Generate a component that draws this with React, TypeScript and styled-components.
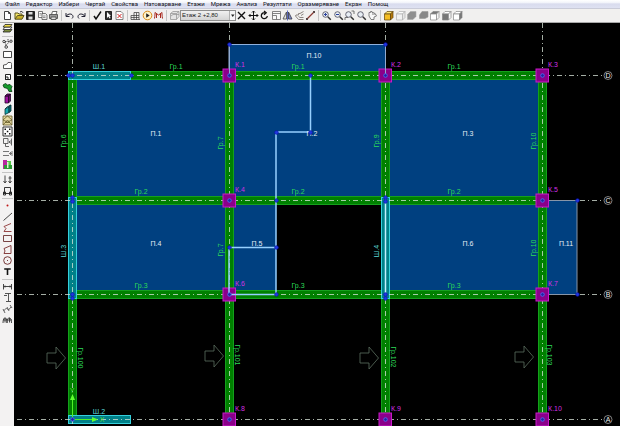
import React from "react";
import styled, { createGlobalStyle } from "styled-components";

const GlobalStyle = createGlobalStyle`
  * { box-sizing: border-box; }
  html, body { margin: 0; background: #000; }
  body { font-family: "Liberation Sans", Arial, sans-serif; }
`;

const Window = styled.div`
  display: flex;
  flex-direction: column;
  height: 100vh;
  overflow: hidden;
`;

const MenuBar = styled.nav`
  display: flex;
  flex: none;
  gap: 6px;
  height: 9px;
  padding: 0 5px;
  background: linear-gradient(#ffffff 0%, #f4f6fb 30%, #d9dcee 50%, #dfe2f2 100%);
  border-bottom: 1px solid #c9cbd8;
`;

const MenuItem = styled.button`
  flex: none;
  padding: 0;
  border: 0;
  background: none;
  color: #101018;
  font: 6px/8px Roboto, "Liberation Sans", sans-serif;
  white-space: nowrap;
`;

const ToolBar = styled.div`
  display: flex;
  flex: none;
  align-items: center;
  height: 14px;
  padding-left: 2px;
  background: #f1f0ef;
  border-bottom: 1px solid #a8a8a8;
`;

const ToolGroup = styled.div<{ $width?: number }>`
  display: flex;
  flex: none;
  justify-content: space-between;
  width: ${(p) => (p.$width ? `${p.$width}px` : "auto")};
`;

const Divider = styled.span`
  flex: none;
  width: 1px;
  height: 11px;
  margin: 0 2px;
  background: #c4c4c4;
`;

const ToolButton = styled.button`
  display: block;
  flex: none;
  width: 11px;
  height: 11px;
  padding: 0;
  border: 0;
  background: none;
  color: #222;

  svg {
    display: block;
    width: 11px;
    height: 11px;
    fill: none;
    stroke: currentColor;
    stroke-width: 1;
  }
`;

const StoreySelect = styled.span`
  display: flex;
  flex: none;
  width: 56px;
  height: 11px;
  border: 1px solid #8e8e8e;
  background: linear-gradient(#f0f0f0, #d4d4d4);

  select {
    flex: 1;
    min-width: 0;
    padding: 0 0 0 1px;
    border: 0;
    appearance: none;
    background: none;
    color: #222;
    font: 6px/9px "Liberation Sans", Arial, sans-serif;
  }
  svg {
    flex: none;
    width: 6px;
    height: 9px;
    background: #f6f6f6;
    border-left: 1px solid #b0b0b0;
    pointer-events: none;
  }
`;

const Workspace = styled.div`
  display: flex;
  flex: 1;
  min-height: 0;
`;

const SideBar = styled.div`
  display: flex;
  flex: none;
  flex-direction: column;
  width: 14px;
  padding-left: 2px;
  background: #f3f2f2;
`;

const SideDivider = styled.span`
  flex: none;
  width: 11px;
  height: 1px;
  margin: 2px 0 1px;
  background: #c4c4c4;
`;

const Canvas = styled.main`
  flex: 1;
  min-width: 0;
  background: #000;

  svg {
    display: block;
    width: 100%;
    height: 100%;
  }
  text {
    font: 7px "Liberation Sans", Arial, sans-serif;
    text-anchor: middle;
  }
`;

const cube = (top: string, front: string, side: string, line: string) => (
  <g stroke={line} strokeWidth=".7">
    <path d="M1.5 4 4 1.5h6L7.5 4z" fill={top} />
    <path d="M1.5 4h6v6h-6z" fill={front} />
    <path d="M7.5 4 10 1.5v6L7.5 10z" fill={side} />
  </g>
);

const lens = (extra: React.ReactNode) => (
  <g>
    <circle cx="4.5" cy="4.5" r="2.8" fill="#e8eef4" stroke="#445" strokeWidth=".8" />
    <path d="m6.8 6.8 3 3" stroke="#333" strokeWidth="1.5" />
    {extra}
  </g>
);

const icons: Record<string, React.ReactNode> = {
  new: <path d="M2.5 1.5h4l2 2v6h-6zM6.5 1.5v2h2" fill="#fff" stroke="#444" />,
  open: (
    <g stroke="#5d5520">
      <path d="M1 9V3h3l1 1h3v1.5" fill="#f4e66a" />
      <path d="M1 9.2 3.5 5.5H10L8 9.2z" fill="#c8b028" />
      <path d="M6 2c1.5-1 2.5-.5 3 .8" stroke="#333" />
    </g>
  ),
  save: (
    <g>
      <path d="M1.5 1.5h8v8h-8z" fill="#222" />
      <path d="M3.5 2h4v2.5h-4zM3.5 6.5h4v3h-4z" fill="#ddd" stroke="none" />
    </g>
  ),
  copy: (
    <g stroke="#555" strokeWidth=".8">
      <path d="M1.5 1.5h4v6h-4z" fill="#fff" />
      <path d="M5 3.5h3.5L10 5v4.5H5z" fill="#eee" />
      <path d="M6 6h2.5M6 7.5h2.5M2.5 3.5h2M2.5 5h2" strokeWidth=".6" />
    </g>
  ),
  print: (
    <g stroke="#444" strokeWidth=".8">
      <path d="M3.5 4.5 4.5 1.5H9l-1 3" fill="#fff" />
      <path d="M1.5 4.5h8v4h-8z" fill="#999" />
      <path d="M3 7h5v2.5H3z" fill="#ddd" />
    </g>
  ),
  undo: <path d="M2 3v3.5h3.5M2.3 6C4 3.5 8.5 3 9 6.5c0 1-.5 1.500-1 2" stroke="#223" />,
  redo: <path d="M9 3v3.5H5.5M8.7 6C7 3.5 2.5 3 2 6.5c0 1 .5 1.500 1 2" stroke="#223" />,
  check: <path d="m2 6 2 3 5-7.5" stroke="#111" strokeWidth="1.5" />,
  pick: (
    <g>
      <path d="M2.5 1.5h6v8h-6z" fill="#333" stroke="#222" />
      <path d="M4 2v6l1.5-1.5 1 2 1-.5-1-2H8z" fill="#fff" stroke="none" />
    </g>
  ),
  discard: (
    <g>
      <path d="M2 1.5h5l2 2v6H2z" fill="#fff" stroke="#666" strokeWidth=".8" />
      <path d="m3.5 4 4 4m0-4-4 4" stroke="#d02020" />
    </g>
  ),
  frame: <path d="M4 9.5v-7h2.5v7M6.5 2.5H9v7M1 9.5v-4h8M1 9.5h9M1 7.5h8" stroke="#333" strokeWidth=".7" />,
  run: (
    <g>
      <circle cx="5.5" cy="5.5" r="4.3" fill="#fff3c8" stroke="#d88a18" />
      <path d="m4.2 3.2 3.5 2.3-3.5 2.3z" fill="#222" stroke="none" />
    </g>
  ),
  moment: <path d="M1.5 8.5c.5-3 .5-4 .5-6L5.5 5 9 2.5c0 2 0 3 .5 6M3.5 8V4M7.5 8V4" stroke="#a82820" />,
  storey: <path d="M1.5 3.5 4 1.5h6v5L7.5 9.5h-6zM1.5 3.5h6v6M7.5 3.5l2.5-2M2 6l2-1.5h6" stroke="#999" strokeWidth=".8" fill="#e4e4e4" />,
  erase: <path d="m2 2 7 7m0-7-7 7" stroke="#111" strokeWidth="1.4" />,
  move: <path d="M5.5 1v9M1 5.5h9M4 2.5 5.5 1 7 2.5M4 8.5 5.5 10 7 8.5M2.5 4 1 5.5 2.5 7M8.5 4 10 5.5 8.5 7" stroke="#111" />,
  rotate: <path d="M8.3 6A3 3 0 1 1 6 2.7M5 .9l2.2 1.9L5 4.7" stroke="#111" strokeWidth="1.3" />,
  scale: <path d="M1.5 1.5h8v8h-8zM1.5 5.5h4v4M1.5 3.5h8" stroke="#666" fill="#f8f8f8" strokeWidth=".8" />,
  mirror: (
    <g strokeWidth=".8">
      <path d="M4.5 2v7H1z" fill="#e2e2e2" stroke="#444" />
      <path d="M6.5 2v7H10z" fill="#7d8cc8" stroke="#334" />
      <path d="M5.5.5v10" stroke="#3344a8" />
    </g>
  ),
  offset: <path d="M9.5 1.5 6 3.5H4.5V5H2L1.5 6l3 3.5h5M9.5 4 7 5.5M4.5 6.5 6 7.5h3.5" stroke="#8c8580" />,
  measure: (
    <g>
      <path d="m2 9 7-7" stroke="#8c3c34" strokeWidth="1.3" />
      <path d="M1 8h2v2H1zM8 1h2v2H8z" fill="#544" stroke="none" />
    </g>
  ),
  zoomin: lens(<path d="M3 4.5h3M4.5 3v3" stroke="#2a3f9c" />),
  zoomout: lens(<path d="M3 4.5h3" stroke="#2a3f9c" />),
  zoomwin: lens(<path d="M1 10V7.5h3M7.5 1H10v3" stroke="#555" strokeWidth=".8" />),
  zoomall: lens(null),
  pan: <path d="M2 6V2.5h1.5v-1H5v1h1.500l2 1.500M2 6l2 3.500h3V7l2.500-1-1-2H5" stroke="#666" fill="#f8f8f8" strokeWidth=".8" />,
  cubeY: cube("#ffe878", "#f4bd22", "#b77a0c", "#60440a"),
  cubeW: cube("#fafafa", "#f2f2f2", "#e6e6e6", "#b0b0b0"),
  cubeG: <path d="M1.5 4.5 4.5 1.5H10v5L7 9.5H1.5z" fill="#8f8f8f" stroke="#a8a8a8" strokeWidth=".6" />,
  cubeH: <path d="M1.5 5 4 1.5h6V7L7 8.5H1.5z" fill="#888" stroke="#999" strokeWidth=".6" />,
  cubeT: cube("#777", "#fff", "#f5f5f5", "#888"),
  cubeF: cube("#fff", "#777", "#f5f5f5", "#888"),
  cubeS: cube("#fff", "#fff", "#777", "#888"),
  layers: (
    <g stroke="#222" strokeWidth=".8">
      <path d="m1 9 2-2.5h7L8 9z" fill="#7b8b3a" />
      <path d="m1 6.5 2-2.5h7L8 6.5z" fill="#fff" />
      <path d="m1 4 2-2.5h7L8 4z" fill="#f0dc48" />
    </g>
  ),
  nodes: (
    <g stroke="#333" strokeWidth=".9">
      <path d="M3 3.5h5M3 4l1 4M4.5 6.5l3.5-3M6 1v2" strokeDasharray="1.5 1" />
      <circle cx="2" cy="3.5" r="1.2" />
      <circle cx="9" cy="3.2" r="1.2" />
      <circle cx="4.2" cy="9" r="1.3" />
    </g>
  ),
  rect: <path d="M1.5 2.5h8v6h-8z" stroke="#333" fill="#fff" strokeWidth=".9" />,
  poly: <path d="M1.5 8.5V5l3-.5L6 2.5h2.5c1 0 1 1 1 2v4z" stroke="#444" fill="#fff" strokeWidth=".9" />,
  opening: <path d="M3.5 3.5h5v5h-5zM3.5 8.5H6V6H3.5z" stroke="#222" fill="#fff" />,
  beam: <path d="m1 3 2.500-1.500L5.500 3 8 2.500 10 4.500 9 7l1 2.500L7 9.500 5.500 6.500 2 5.500z" fill="#159a2c" stroke="#063c10" strokeWidth=".8" />,
  column: (
    <g stroke="#24062a" strokeWidth=".8">
      <path d="M3 3v7h3.5V3z" fill="#a012a0" />
      <path d="M6.5 3v7l2-2V1zM3 3l2-2h3.5l-2 2z" fill="#6c086c" />
    </g>
  ),
  wall: (
    <g stroke="#043034" strokeWidth=".8">
      <path d="M3 5v5.5l4-2V3z" fill="#18a8b0" />
      <path d="M7 3v5.5L9 7V1L7 2zM3 5l2-2 4-2" fill="#087078" />
    </g>
  ),
  mesh: (
    <g stroke="#655a28" strokeWidth=".8">
      <path d="M1 1h9v9H1z" fill="#e4d8a0" />
      <path d="m1 10 4.500-5L10 10M1 5l4.500-4L10 5 5.500 7zM3 7.500h5" />
    </g>
  ),
  points: (
    <g>
      <path d="M1 1h9v9H1z" stroke="#333" fill="#fff" />
      <path d="M2.5 2.5H4V4H2.5zM7 2.5h1.5V4H7zM4.8 4.8h1.5v1.5H4.8zM2.5 7H4v1.5H2.5zM7 7h1.5v1.5H7z" fill="#111" stroke="none" />
    </g>
  ),
  loadA: <path d="M1.5 1.5H6v5H1.5zM3.5 6.5v3H7M9.5 1.5v7M9.5 5H7l1.5-1.5M7 5l1.5 1.5" stroke="#555" strokeWidth=".9" />,
  loadB: <path d="M1 3.5h6M1 7.5h6M10 3v5M10 5.5H7.5L9 4M7.5 5.5 9 7" stroke="#666" strokeWidth=".9" />,
  blocks: (
    <g stroke="none">
      <path d="M1 1h4v9H1z" fill="#b824a0" />
      <path d="M5 2h4v4H5z" fill="#56c848" />
      <path d="M2 6h8v4H2z" fill="#2c9a34" />
      <path d="M5 3h1.5v6H5z" fill="#d8f0d0" />
    </g>
  ),
  sort: <path d="M3 1.5v7M1.5 7 3 9l1.5-2M8 2v7M6.5 4h3M6.5 7 8 9l1.5-2" stroke="#333" strokeWidth=".9" />,
  snap: <path d="M2.5 8V2.5h6V8M1 8.5h9M1.5 7v3h2V7zM7.5 7v3h2V7z" stroke="#222" strokeWidth=".9" />,
  dot: <circle cx="5.5" cy="5.5" r="1" fill="#c01818" stroke="none" />,
  line: <path d="M1.5 9.5 10 2" stroke="#333" strokeWidth=".9" />,
  pline: <path d="M9 1.5 2 4.5l2 2-2 3h7.5" stroke="#8c3434" strokeWidth=".9" />,
  square: <path d="M1.5 2.5h8v6h-8z" stroke="#6a3030" strokeWidth=".9" />,
  pgon: <path d="M9 1.5v8H2L3 7 2 4.5z" stroke="#7a2c2c" strokeWidth=".9" />,
  circle: (
    <g stroke="#6a2626" strokeWidth=".9">
      <circle cx="5.5" cy="5.5" r="3.8" />
      <path d="M5 5.5h1" />
    </g>
  ),
  text: <path d="M3 3.7V3h5v.7M5.5 3v6" stroke="#111" strokeWidth="1.6" />,
  dimH: <path d="M1.5 3v5.5M9.5 3v5.5M1.5 5.5h8M3 4.5v2M8 4.5v2" stroke="#333" strokeWidth=".9" />,
  dimV: <path d="M3 1.5h6M4 9.5h5M6.5 1.5v8M2 3.5h3" stroke="#444" strokeWidth=".9" />,
  dimA: <path d="m1.5 8 3-3 2 2L9 4M1 6l2 4M5 4l2 4M8 2l2 3" stroke="#555" strokeWidth=".9" />,
  dimC: <path d="M1 9c0-7 4-7 4 0 0-7 4.5-7 4.5 0M1 6h9M3 4v4.5M7.5 4v4.5" stroke="#333" strokeWidth=".9" />,
};

type Tool = [icon: string, label: string];
const Tools = ({ items }: { items: Tool[] }) => (
  <>
    {items.map(([icon, label]) => (
      <ToolButton key={icon} type="button" aria-label={label}>
        <svg viewBox="0 0 11 11" aria-hidden="true">{icons[icon]}</svg>
      </ToolButton>
    ))}
  </>
);

const menus = ["Файл", "Редактор", "Избери", "Чертай", "Свойства", "Натоварване", "Етажи", "Мрежа", "Анализ", "Резултати", "Оразмеряване", "Екран", "Помощ"];

const fileTools: Tool[] = [["new", "Нов"], ["open", "Отвори"], ["save", "Запиши"], ["copy", "Копирай"], ["print", "Печат"]];
const historyTools: Tool[] = [["undo", "Назад"], ["redo", "Напред"]];
const pickTools: Tool[] = [["check", "Потвърди"], ["pick", "Избери"], ["discard", "Откажи"]];
const modelTools: Tool[] = [["frame", "Рамка"], ["run", "Изчисли"], ["moment", "Моменти"]];
const editTools: Tool[] = [["erase", "Изтрий"], ["move", "Премести"], ["rotate", "Завърти"], ["scale", "Мащаб"], ["mirror", "Огледало"], ["offset", "Отместване"], ["measure", "Измери"]];
const zoomTools: Tool[] = [["zoomin", "Увеличи"], ["zoomout", "Намали"], ["zoomwin", "Прозорец"], ["zoomall", "Всичко"], ["pan", "Премести изгледа"]];
const viewTools: Tool[] = [["cubeY", "3D изглед"], ["cubeW", "Контур"], ["cubeG", "Плътен"], ["cubeH", "Скрити линии"], ["cubeT", "Отгоре"], ["cubeF", "Отпред"], ["cubeS", "Отстрани"]];

const sideTools: Tool[][] = [
  [["layers", "Слоеве"]],
  [["nodes", "Възли"], ["rect", "Плоча"], ["poly", "Контур на плоча"], ["opening", "Отвор"], ["beam", "Греда"], ["column", "Колона"], ["wall", "Шайба"], ["mesh", "Мрежа"], ["points", "Точки"], ["loadA", "Товар"], ["loadB", "Линеен товар"], ["blocks", "Блокове"]],
  [["sort", "Подреди"], ["snap", "Прихващане"]],
  [["dot", "Точка"], ["line", "Линия"], ["pline", "Полилиния"], ["square", "Правоъгълник"], ["pgon", "Многоъгълник"], ["circle", "Окръжност"], ["text", "Текст"]],
  [["dimH", "Хоризонтален размер"], ["dimV", "Вертикален размер"], ["dimA", "Наклонен размер"], ["dimC", "Верига размери"]],
];

type Label = [x: number, y: number, text: string];
const axesX = [72, 229, 385, 542];
const axesY = [75, 200, 294];
const slabLabels: Label[] = [[156, 136, "П.1"], [312, 136, "П.2"], [468, 136, "П.3"], [156, 246, "П.4"], [257, 246, "П.5"], [468, 246, "П.6"], [566, 246, "П.11"], [314, 58, "П.10"]];
const beamLabels: Label[] = [[176, 69, "Гр.1"], [298, 69, "Гр.1"], [454, 69, "Гр.1"], [141, 194, "Гр.2"], [298, 194, "Гр.2"], [454, 194, "Гр.2"], [141, 288, "Гр.3"], [298, 288, "Гр.3"], [454, 288, "Гр.3"]];
const uprightLabels: Label[] = [[66, 141, "Гр.6"], [223, 143, "Гр.7"], [379, 141, "Гр.9"], [536, 141, "Гр.10"], [223, 250, "Гр.7"], [536, 248, "Гр.10"]];
const storeyLabels: Label[] = [[78, 358, "Гр.100"], [235, 355, "Гр.101"], [391, 357, "Гр.102"], [547, 355, "Гр.103"]];
const columnLabels: Label[] = [[240, 67, "К.1"], [396, 67, "К.2"], [553, 67, "К.3"], [240, 192, "К.4"], [553, 192, "К.5"], [240, 286, "К.6"], [553, 286, "К.7"], [240, 411, "К.8"], [396, 411, "К.9"], [555, 411, "К.10"]];
const columns = [[229, 75], [385, 75], [542, 75], [229, 200], [542, 200], [229, 294], [542, 294], [229, 419], [385, 419], [542, 419]];
const walls = [[68, 71, 63, 9], [68, 197, 9, 102], [381, 197, 9, 102], [68, 415, 63, 9]];
const joints = [[68, 75], [72, 75], [131, 75], [310, 75], [229, 44], [385, 44], [310, 132], [276, 132], [276, 200], [72, 197], [72, 201], [385, 197], [385, 201], [577, 200], [577, 294], [229, 247], [276, 247], [276, 294], [72, 294], [72, 298], [385, 294], [385, 298]];
const gridMarks: Label[] = [[608, 75, "D"], [608, 200, "C"], [608, 294, "B"], [608, 419, "A"]];
const loads = [[47, 358], [205, 356], [360, 358], [515, 357]];

const Plan = () => (
  <svg viewBox="14 23 606 403" preserveAspectRatio="xMinYMin meet" role="img" aria-label="План на етаж 2">
    <g fill="#004080">
      <path d="M72 75h470v219H385V200H276v94H72z" />
      <path d="M229 44.5h156.5V75H229z" stroke="#8fb0dc" />
      <path d="M542 200.5h35v94h-35z" stroke="#8795a8" />
    </g>
    <g fill="#008000" stroke="#14a01c">
      {axesX.map((x) => <rect key={x} x={x - 3.5} y="71.5" width="8" height="348" />)}
      {axesY.map((y) => <rect key={y} x="68.5" y={y - 3.5} width="473" height="8" />)}
    </g>
    <g fill="#008000">
      {axesX.map((x) => <rect key={x} x={x - 3} y="76" width="7" height="340" />)}
    </g>
    <g fill="#008088" stroke="#34d0dc">
      {walls.map(([x, y, w, h]) => <rect key={`${x}-${y}`} x={x + 0.5} y={y + 0.5} width={w - 1} height={h - 1} />)}
    </g>
    <g stroke="#d8e4d8" strokeWidth=".9" strokeDasharray="5 3 1 3" opacity=".85">
      {axesX.map((x) => <path key={x} d={`M${x + 0.5} 23V426`} />)}
      <path d="M17 75.5H602M17 200.5H542M580 200.5H602M17 294.5H542M580 294.5H602M17 419.5H602" />
    </g>
    <g fill="#8a008a" stroke="#c818c8">
      {columns.map(([x, y]) => <rect key={`${x}-${y}`} x={x - 6} y={y - 6} width="12.5" height="13" />)}
    </g>
    <g fill="none" stroke="#96d0ff" strokeWidth="1.5">
      <path d="M310.5 75v57H276v162.5h-47v-47h47" />
      <path d="M385.5 200v94" stroke="#c0f0ff" />
    </g>
    <path d="M229.5 44v31M385.5 44v31" stroke="#91a9d0" />
    <g fill="#e4ecf4">
      {slabLabels.map(([x, y, t]) => <text key={t} x={x} y={y}>{t}</text>)}
    </g>
    <g fill="#2038e0" stroke="#0c10b0" strokeWidth=".7">
      {joints.map(([x, y]) => <circle key={`${x}-${y}`} cx={x + 0.5} cy={y + 0.5} r="1.8" />)}
    </g>
    <g fill="#2020a0" stroke="#5068f0" strokeWidth=".9">
      {columns.map(([x, y]) => <circle key={`${x}-${y}`} cx={x + 0.5} cy={y + 0.5} r="1.8" />)}
      <circle cx="72.5" cy="419.5" r="1.8" />
    </g>
    <g fill="none" stroke="#5c6e60" strokeWidth=".8">
      {loads.map(([x, y]) => <path key={x} d={`M${x} ${y - 5}h9v-6l9.5 11-9.5 11v-6h-9z`} />)}
    </g>
    <g stroke="#50f028" fill="#60ff30">
      <path d="M72.5 417v-17M75 419.5h17" />
      <path d="m70 400 2.500-6 2.500 6zM92 417l6 2.500-6 2.500z" stroke="none" />
    </g>
    <g fill="#58dc30">
      <text x="72" y="393">Y</text>
      <text x="102" y="422">X</text>
    </g>
    <g fill="#2cdc58">
      {beamLabels.map(([x, y, t]) => <text key={`${x}-${y}`} x={x} y={y}>{t}</text>)}
      {uprightLabels.map(([x, y, t]) => <text key={`${x}-${y}`} transform={`translate(${x} ${y}) rotate(-90)`}>{t}</text>)}
      {storeyLabels.map(([x, y, t]) => <text key={t} transform={`translate(${x} ${y}) rotate(90)`}>{t}</text>)}
    </g>
    <g fill="#d030e0">
      {columnLabels.map(([x, y, t]) => <text key={t} x={x} y={y}>{t}</text>)}
    </g>
    <g fill="#5cd8d8">
      <text x="99" y="69">Ш.1</text>
      <text x="99" y="414">Ш.2</text>
      <text transform="translate(66 251) rotate(-90)">Ш.3</text>
      <text transform="translate(379 251) rotate(-90)">Ш.4</text>
    </g>
    <g fill="none" stroke="#a0a0a0" strokeWidth=".8">
      {gridMarks.map(([x, y]) => <circle key={y} cx={x} cy={y + 0.5} r="4" />)}
    </g>
    <g fill="#f0f0f0">
      {gridMarks.map(([x, y, t]) => <text key={t} x={x} y={y + 3}>{t}</text>)}
    </g>
  </svg>
);

export default function App() {
  return (
    <Window>
      <GlobalStyle />
      <MenuBar aria-label="Главно меню">
        {menus.map((m) => <MenuItem key={m} type="button">{m}</MenuItem>)}
      </MenuBar>
      <ToolBar role="toolbar" aria-label="Инструменти">
        <ToolGroup $width={57}><Tools items={fileTools} /></ToolGroup>
        <Divider />
        <ToolGroup $width={23}><Tools items={historyTools} /></ToolGroup>
        <Divider />
        <ToolGroup $width={33}><Tools items={pickTools} /></ToolGroup>
        <Divider />
        <ToolGroup $width={34}><Tools items={modelTools} /></ToolGroup>
        <Divider />
        <ToolGroup><Tools items={[["storey", "Етаж"]]} /></ToolGroup>
        <StoreySelect>
          <select aria-label="Етаж" defaultValue="2">
            <option value="2">Етаж 2 +2,80</option>
          </select>
          <svg viewBox="0 0 5 9" aria-hidden="true"><path d="M1 3.5h3.5L2.75 6z" fill="#222" /></svg>
        </StoreySelect>
        <ToolGroup $width={80}><Tools items={editTools} /></ToolGroup>
        <Divider />
        <ToolGroup $width={57}><Tools items={zoomTools} /></ToolGroup>
        <Divider />
        <ToolGroup $width={80}><Tools items={viewTools} /></ToolGroup>
      </ToolBar>
      <Workspace>
        <SideBar role="toolbar" aria-label="Чертане" aria-orientation="vertical">
          {sideTools.map((items, i) => (
            <React.Fragment key={items[0][0]}>
              {i > 0 && <SideDivider />}
              <Tools items={items} />
            </React.Fragment>
          ))}
        </SideBar>
        <Canvas><Plan /></Canvas>
      </Workspace>
    </Window>
  );
}
